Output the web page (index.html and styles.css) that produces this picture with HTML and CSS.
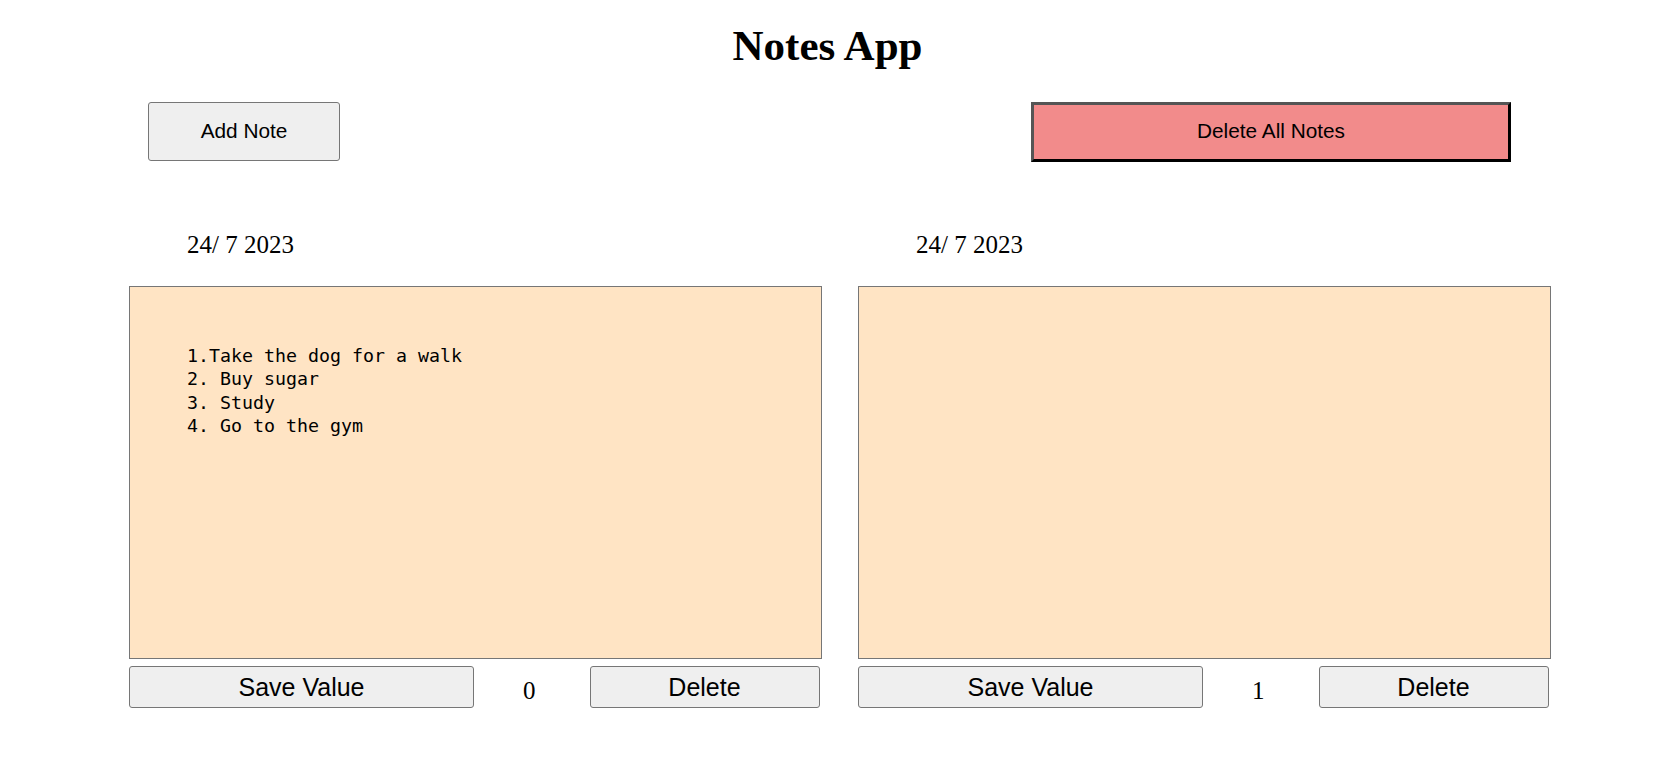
FILE: index.html
```html
<!DOCTYPE html>
<html lang="en">
<head>
<meta charset="utf-8">
<title>Notes App</title>
<link rel="stylesheet" href="styles.css">
</head>
<body>
<div class="page">
  <h1 class="title">Notes App</h1>
  <div class="toolbar">
    <button class="btn add-btn">Add Note</button>
    <button class="btn delete-all-btn">Delete All Notes</button>
  </div>
  <div class="notes">
    <div class="note">
      <div class="note-date">24/ 7 2023</div>
      <textarea class="note-text">1.Take the dog for a walk
2. Buy sugar
3. Study
4. Go to the gym</textarea>
      <div class="note-actions">
        <button class="btn action-btn save-btn">Save Value</button>
        <span class="note-index">0</span>
        <button class="btn action-btn del-btn">Delete</button>
      </div>
    </div>
    <div class="note">
      <div class="note-date">24/ 7 2023</div>
      <textarea class="note-text"></textarea>
      <div class="note-actions">
        <button class="btn action-btn save-btn">Save Value</button>
        <span class="note-index">1</span>
        <button class="btn action-btn del-btn">Delete</button>
      </div>
    </div>
  </div>
</div>
</body>
</html>
```
FILE: styles.css
```css
html, body {
  margin: 0;
  padding: 0;
  background: #ffffff;
}

body {
  font-family: "Liberation Serif", "Times New Roman", serif;
  color: #000;
}

.page {
  width: 1655px;
}

.title {
  margin: 22px 0 0;
  font-size: 43px;
  font-weight: bold;
  line-height: 47px;
  text-align: center;
}

.toolbar {
  display: flex;
  align-items: flex-start;
  margin-top: 33px;
  padding-left: 148px;
}

.btn {
  box-sizing: border-box;
  font-family: "Liberation Sans", Arial, sans-serif;
  color: #000;
  background: #efefef;
  border: 1px solid #767676;
  border-radius: 3px;
  padding: 0;
  margin: 0;
}

.add-btn {
  width: 192px;
  height: 59px;
  font-size: 20.8px;
  padding-bottom: 2px;
}

.delete-all-btn {
  width: 480px;
  height: 60px;
  margin-left: 691px;
  font-size: 20.8px;
  padding-bottom: 2px;
  background: #f28b8b;
  border-radius: 0;
  border-width: 3px;
  border-style: solid;
  border-color: #555555 #000000 #000000 #555555;
}

.notes {
  display: flex;
  gap: 36px;
  margin-top: 68px;
  padding-left: 129px;
}

.note {
  display: flex;
  flex-direction: column;
  width: 693px;
}

.note-date {
  font-size: 25px;
  line-height: 29px;
  padding-left: 58px;
  margin-bottom: 27px;
}

.note-text {
  display: block;
  box-sizing: border-box;
  width: 693px;
  height: 373px;
  margin: 0;
  padding: 57px 56px 57px 57px;
  border: 1px solid #767676;
  background: #ffe4c4;
  font-family: "DejaVu Sans Mono", monospace;
  font-size: 18.27px;
  line-height: 23.3px;
  color: #000;
  resize: none;
  outline: none;
  overflow: hidden;
}

.note-actions {
  display: flex;
  align-items: center;
  margin-top: 7px;
  height: 42px;
}

.action-btn {
  height: 42px;
  font-size: 25px;
}

.save-btn {
  width: 345px;
}

.del-btn {
  width: 230px;
  margin-left: 54px;
}

.note-index {
  margin-left: 49px;
  margin-top: 6px;
  font-size: 25px;
  line-height: 29px;
}
```
